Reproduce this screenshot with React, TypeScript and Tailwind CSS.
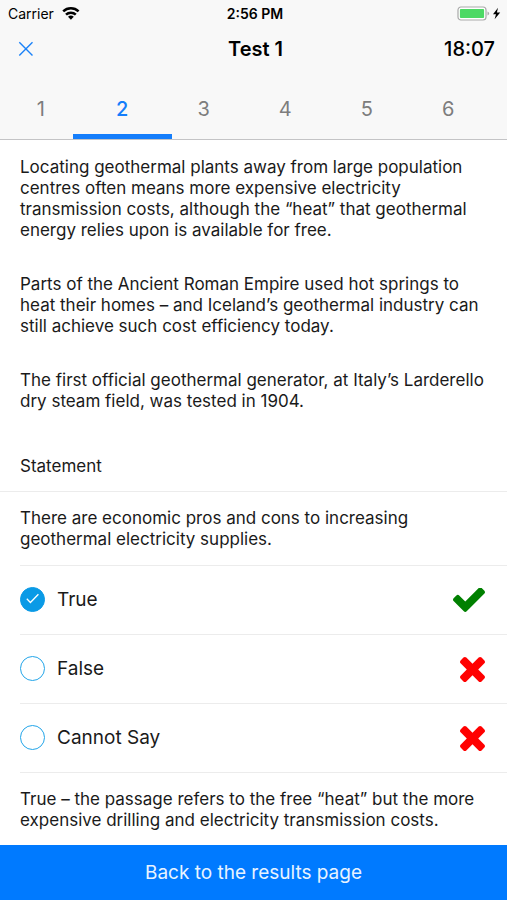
import { useState } from "react";
import clsx from "clsx";

interface Answer {
  id: string;
  label: string;
  correct: boolean;
}

const questions = [1, 2, 3, 4, 5, 6];

const passage = [
  "Locating geothermal plants away from large population centres often means more expensive electricity transmission costs, although the “heat” that geothermal energy relies upon is available for free.",
  "Parts of the Ancient Roman Empire used hot springs to heat their homes – and Iceland’s geothermal industry can still achieve such cost efficiency today.",
  "The first official geothermal generator, at Italy’s Larderello dry steam field, was tested in 1904.",
];

const answers: Answer[] = [
  { id: "true", label: "True", correct: true },
  { id: "false", label: "False", correct: false },
  { id: "cannot-say", label: "Cannot Say", correct: false },
];

export default function App() {
  const [question, setQuestion] = useState(2);
  const [selected, setSelected] = useState("true");

  return (
    <div className="flex min-h-screen flex-col bg-white font-['Inter',sans-serif] text-black">
      <header className="border-b border-[#c4c4c6] bg-[#f8f8f8]">
        <StatusBar />
        <div className="grid h-11 grid-cols-3 items-center pr-3 pl-4">
          <button type="button" aria-label="Close" className="w-5 text-[#1b82f8]">
            <svg viewBox="0 0 20 20" className="size-5" fill="none" stroke="currentColor" strokeWidth="1.4">
              <path d="M3.3 3.2l13.2 13.2M16.5 3.2L3.3 16.4" />
            </svg>
          </button>
          <h1 className="text-center text-xl font-semibold">Test 1</h1>
          <time className="text-right text-xl font-medium">18:07</time>
        </div>
        <nav className="flex h-[68px] pr-[18px]">
          {questions.map((n) => (
            <button
              key={n}
              type="button"
              onClick={() => setQuestion(n)}
              className={clsx(
                "relative flex-1 pt-2 text-xl",
                n === question ? "font-medium text-[#157efb]" : "text-[#7d7d7d]",
              )}
            >
              {n}
              {n === question && (
                <span className="absolute -inset-x-[9px] bottom-0 h-[5px] bg-[#157efb]" />
              )}
            </button>
          ))}
        </nav>
      </header>

      <main className="flex-1 text-[17px] leading-[21px] text-[#1a1a1a]">
        <section className="border-b border-[#ececec] pt-[17px] pr-4 pb-3.5 pl-5">
          <div className="flex flex-col gap-[33px]">
            {passage.map((text) => (
              <p key={text}>{text}</p>
            ))}
          </div>
          <h2 className="pt-11">Statement</h2>
        </section>

        <section className="pl-5">
          <p className="border-b border-[#ececec] pt-4 pr-4 pb-[15px]">
            There are economic pros and cons to increasing geothermal electricity supplies.
          </p>
          {answers.map((answer) => (
            <AnswerRow
              key={answer.id}
              answer={answer}
              checked={selected === answer.id}
              onSelect={() => setSelected(answer.id)}
            />
          ))}
          <p className="pt-4 pr-4 pb-3.5">
            True – the passage refers to the free “heat” but the more expensive drilling and
            electricity transmission costs.
          </p>
        </section>
      </main>

      <button type="button" className="h-[55px] bg-[#007aff] pt-0.5 text-[19px] text-[#e8f3ff]">
        Back to the results page
      </button>
    </div>
  );
}

function AnswerRow({
  answer,
  checked,
  onSelect,
}: {
  answer: Answer;
  checked: boolean;
  onSelect: () => void;
}) {
  return (
    <div className="flex h-[69px] items-center justify-between border-b border-[#ececec] pr-[22px]">
      <label className="flex items-center gap-3 pb-0.5 text-[19px]">
        <span className="grid size-[25px] place-items-center">
          <input
            type="radio"
            name="answer"
            checked={checked}
            onChange={onSelect}
            className="col-start-1 row-start-1 size-[25px] appearance-none rounded-full border border-[#22a5e9] checked:border-[#0a9ae6] checked:bg-[#0a9ae6]"
          />
          {checked && (
            <svg
              viewBox="0 0 14 14"
              className="pointer-events-none col-start-1 row-start-1 size-[14px]"
              fill="none"
              stroke="white"
              strokeWidth="1.3"
            >
              <path d="M.8 6.8l3.6 3.7 8-8.3" />
            </svg>
          )}
        </span>
        {answer.label}
      </label>
      {answer.correct ? <CorrectIcon /> : <WrongIcon />}
    </div>
  );
}

function CorrectIcon() {
  return (
    <svg viewBox="121 370 1550 1152" className="h-6 w-8 fill-[#008000]" role="img" aria-label="Correct">
      <path d="M1671 566q0 40-28 68l-724 724-136 136q-28 28-68 28t-68-28l-136-136-362-362q-28-28-28-68t28-68l136-136q28-28 68-28t68 28l294 295 656-657q28-28 68-28t68 28l136 136q28 28 28 68z" />
    </svg>
  );
}

function WrongIcon() {
  return (
    <svg viewBox="302 366 1188 1188" className="size-[25px] fill-[#ff0000]" role="img" aria-label="Wrong">
      <path d="M1490 1322q0 40-28 68l-136 136q-28 28-68 28t-68-28l-294-294-294 294q-28 28-68 28t-68-28l-136-136q-28-28-28-68t28-68l294-294-294-294q-28-28-28-68t28-68l136-136q28-28 68-28t68 28l294 294 294-294q28-28 68-28t68 28l136 136q28 28 28 68t-28 68l-294 294 294 294q28 28 28 68z" />
    </svg>
  );
}

function StatusBar() {
  return (
    <div className="grid h-[27px] grid-cols-3 items-center pr-[5px] pl-2 text-sm">
      <div className="flex items-center gap-2">
        Carrier
        <svg viewBox="0 0 18 13" className="h-[13px] w-[18px]" fill="none" stroke="black" strokeWidth="2.5">
          <path d="M1.2 4.4a11.2 11.2 0 0 1 15.4 0" />
          <path d="M4 7.7a7 7 0 0 1 9.8 0" />
          <path d="M8.9 12.7L6 9.8a4.2 4.2 0 0 1 5.8 0z" fill="black" stroke="none" />
        </svg>
      </div>
      <div className="text-center font-semibold">2:56 PM</div>
      <svg viewBox="0 0 45 15" className="h-[15px] w-[45px] justify-self-end">
        <rect x="1" y="1" width="28" height="13" rx="3" fill="white" stroke="#a9a9a9" strokeWidth="1.2" />
        <rect x="2.9" y="2.9" width="24.2" height="9.2" rx="1" fill="#4cd964" />
        <path d="M30.5 5.5q1.6.5 1.6 2t-1.6 2z" fill="#a9a9a9" />
        <path d="M41 1.8L36 8.3h3l-1.4 5 5.6-6.7h-3.3z" fill="black" />
      </svg>
    </div>
  );
}
